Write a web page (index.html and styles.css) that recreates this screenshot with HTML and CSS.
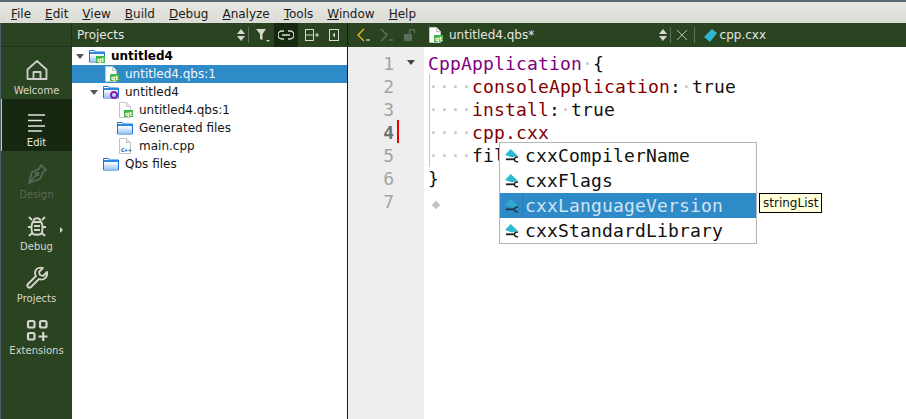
FILE: index.html
```html
<!DOCTYPE html>
<html lang="en">
<head>
<meta charset="utf-8">
<title>Qt Creator</title>
<link rel="stylesheet" href="styles.css">
</head>
<body>
<div class="app">
  <nav class="menubar">
    <span class="menu"><u>F</u>ile</span><span class="menu"><u>E</u>dit</span><span class="menu"><u>V</u>iew</span><span class="menu"><u>B</u>uild</span><span class="menu"><u>D</u>ebug</span><span class="menu"><u>A</u>nalyze</span><span class="menu"><u>T</u>ools</span><span class="menu"><u>W</u>indow</span><span class="menu"><u>H</u>elp</span>
  </nav>
  <div class="main">
    <aside class="modebar">
      <div class="mode-spacer"></div>
      <div class="mode">
        <svg width="24" height="24" viewBox="0 0 24 24" fill="none" stroke="#cfcfc8" stroke-width="1.800" stroke-linejoin="round"><path d="M12 3l9.500 8.500V21h-19V11.500z"/><path d="M8.500 21v-7h7v7"/></svg>
        <span>Welcome</span>
      </div>
      <div class="mode active">
        <svg width="24" height="24" viewBox="0 0 24 24" fill="none" stroke="#e4e4e0" stroke-width="1.600"><path d="M3 5h17M3 10.500h14M3 16h17M3 21h14"/></svg>
        <span>Edit</span>
      </div>
      <div class="mode disabled">
        <svg width="24" height="24" viewBox="0 0 24 24" fill="none" stroke="#56685a" stroke-width="1.800" stroke-linejoin="round"><path d="M16 3l5 5-3 2-3 7-11 4 3-11 7-3z"/><path d="M5 20l6-7"/><circle cx="12" cy="12" r="1.500"/></svg>
        <span>Design</span>
      </div>
      <div class="mode">
        <svg width="24" height="24" viewBox="0 0 24 24" fill="none" stroke="#d6d6d0" stroke-width="1.800"><path d="M8 8h8c2 2 2 10 0 12-1 1-7 1-8 0-2-2-2-10 0-12z"/><path d="M8.500 8c0-5 7-5 7 0M4 3l3 3M20 3l-3 3M3 13h3M18 13h3M4 22l3-3M20 22l-3-3M9 12h6M9 16h6"/></svg>
        <span>Debug</span>
        <i class="mode-arrow"></i>
      </div>
      <div class="mode">
        <svg width="24" height="24" viewBox="0 0 24 24" fill="none" stroke="#d6d6d0" stroke-width="1.800" stroke-linejoin="round"><path d="M22 6l-4 4-3-1-1-3 4-4c-3-1-8 0-8 5 0 1 0 2 1 3L3 18c-1 1-1 2 0 3s2 1 3 0l8-8c5 2 9-2 8-7z"/></svg>
        <span>Projects</span>
      </div>
      <div class="mode">
        <svg width="24" height="24" viewBox="0 0 24 24" fill="none" stroke="#d6d6d0" stroke-width="2.200"><rect x="3" y="3" width="6.500" height="6.500" rx="1.500"/><rect x="15" y="3" width="6.500" height="6.500" rx="1.500"/><rect x="3" y="15" width="6.500" height="6.500" rx="1.500"/><path d="M18.250 14v9M13.500 18.500h9"/></svg>
        <span>Extensions</span>
      </div>
    </aside>

    <section class="projects">
      <header class="toolbar projects-bar">
        <span class="bar-title">Projects</span>
        <svg class="updown" width="8" height="12" viewBox="0 0 8 12" fill="#d8d8d2"><path d="M4 0l4 5H0zM4 12l4-5H0z"/></svg>
        <i class="sep"></i>
        <svg class="ti" width="16" height="16" viewBox="0 0 16 16" fill="#d8d8d2"><path d="M1 2h10L7.500 7v6L5 12V7z"/><path d="M11 13h4l-2 2z"/></svg>
        <span class="ti-btn"><svg width="16" height="12" viewBox="0 0 16 12" fill="none" stroke="#d8d8d2" stroke-width="1.400"><path d="M6 2H4a4 4 0 0 0 0 8h2M10 2h2a4 4 0 0 1 0 8h-2M4 6h8"/></svg></span>
        <svg class="ti split" width="16" height="14" viewBox="0 0 16 14" fill="none" stroke="#d8d8d2"><rect x="1.500" y="1.500" width="8" height="11"/><path d="M1.500 7h8M11 7h4M13 5v4"/></svg>
        <svg class="ti last" width="10" height="12" viewBox="0 0 10 12" fill="none" stroke="#d8d8d2"><rect x=".5" y=".5" width="9" height="11"/><path d="M6 3.500v5L3.500 6z" fill="#d8d8d2" stroke="none"/></svg>
      </header>
      <ul class="tree">
        <li class="row root bold"><i class="twist"></i>
          <svg class="ficon" width="16" height="16" viewBox="0 0 16 16"><use href="#folder"/><rect x="7" y="8" width="9" height="7" fill="#3fb54a"/><text x="8" y="14" class="qt">qt</text></svg>
          <span>untitled4</span></li>
        <li class="row sel l1">
          <svg class="ficon" width="16" height="16" viewBox="0 0 16 16"><use href="#file"/><rect x="7" y="8" width="9" height="7" fill="#3fb54a"/><text x="8" y="14" class="qt">qt</text></svg>
          <span>untitled4.qbs:1</span></li>
        <li class="row root second"><i class="twist"></i>
          <svg class="ficon" width="16" height="16" viewBox="0 0 16 16"><use href="#folder"/><circle cx="11" cy="11" r="3" fill="none" stroke="#8a1fb0" stroke-width="2"/></svg>
          <span>untitled4</span></li>
        <li class="row l2">
          <svg class="ficon" width="16" height="16" viewBox="0 0 16 16"><use href="#file"/><rect x="7" y="8" width="9" height="7" fill="#3fb54a"/><text x="8" y="14" class="qt">qt</text></svg>
          <span>untitled4.qbs:1</span></li>
        <li class="row l2">
          <svg class="ficon" width="16" height="16" viewBox="0 0 16 16"><use href="#folder"/></svg>
          <span>Generated files</span></li>
        <li class="row l2">
          <svg class="ficon" width="16" height="16" viewBox="0 0 16 16"><use href="#file"/><text x="4" y="14" class="cpp">C++</text></svg>
          <span>main.cpp</span></li>
        <li class="row l1">
          <svg class="ficon" width="16" height="16" viewBox="0 0 16 16"><use href="#folder"/></svg>
          <span>Qbs files</span></li>
      </ul>
    </section>

    <section class="editor">
      <header class="toolbar editor-bar">
        <svg class="ti back" width="14" height="14" viewBox="0 0 14 14" fill="none" stroke="#e2b21c" stroke-width="1.500"><path d="M7 1L1 7l6 6"/><path d="M9 12h4" stroke="#b8b8b0"/></svg>
        <svg class="ti fwd" width="14" height="14" viewBox="0 0 14 14" fill="none" stroke="#5c6f5f" stroke-width="1.500"><path d="M1 1l6 6-6 6M9 12h4"/></svg>
        <svg class="ti lock" width="12" height="12" viewBox="0 0 12 12" fill="#5c6f5f"><rect x="0" y="5" width="8" height="7"/><path d="M5.500 5V2.500a2.500 2.500 0 0 1 5 0V4" fill="none" stroke="#5c6f5f" stroke-width="1.500"/></svg>
        <svg class="ti doc" width="16" height="16" viewBox="0 0 16 16"><use href="#file"/><rect x="7" y="8" width="9" height="7" fill="#3fb54a"/><text x="8" y="14" class="qt">qt</text></svg>
        <span class="bar-doc">untitled4.qbs*</span>
        <svg class="updown push" width="8" height="12" viewBox="0 0 8 12" fill="#d8d8d2"><path d="M4 0l4 5H0zM4 12l4-5H0z"/></svg>
        <i class="sep s1"></i>
        <svg class="ti close" width="10" height="10" viewBox="0 0 10 10" stroke="#b8b8b0" stroke-width="1"><path d="M0 0l10 10M10 0L0 10"/></svg>
        <i class="sep s2"></i>
        <svg class="ti sym" width="13" height="13" viewBox="0 0 13 13" fill="#2fb7d0"><path d="M8 0l5 4-7 9-6-5z"/></svg>
        <span class="bar-doc sym-name">cpp.cxx</span>
      </header>
      <div class="edit-body">
        <div class="gutter">
          <div class="ln">1</div><div class="ln">2</div><div class="ln">3</div><div class="ln cur">4</div><div class="ln">5</div><div class="ln">6</div><div class="ln">7</div>
          <i class="fold"></i>
          <i class="mark"></i>
        </div>
        <div class="code">
          <div class="cl"><span class="typ">CppApplication</span><span class="dot">·</span>{</div>
          <div class="cl"><span class="dot">····</span><span class="prop">consoleApplication</span>:<span class="dot">·</span>true</div>
          <div class="cl"><span class="dot">····</span><span class="prop">install</span>:<span class="dot">·</span>true</div>
          <div class="cl"><span class="dot">····</span><span class="prop">cpp.cxx</span></div>
          <div class="cl"><span class="dot">····</span>files</div>
          <div class="cl">}</div>
          <div class="cl"><span class="diamond"></span></div>
          <i class="indent"></i>
          <div class="popup">
            <div class="item"><svg class="pi" width="16" height="16"><use href="#sym"/></svg><span>cxxCompilerName</span></div>
            <div class="item"><svg class="pi" width="16" height="16"><use href="#sym"/></svg><span>cxxFlags</span></div>
            <div class="item on"><svg class="pi" width="16" height="16"><use href="#sym"/></svg><i class="item-rule"></i><span>cxxLanguageVersion</span></div>
            <div class="item"><svg class="pi" width="16" height="16"><use href="#sym"/></svg><span>cxxStandardLibrary</span></div>
          </div>
          <div class="tip">stringList</div>
        </div>
      </div>
    </section>
  </div>
</div>
<svg class="defs" width="0" height="0">
  <defs>
    <linearGradient id="fg" x1="0" y1="0" x2="0" y2="1"><stop offset="0" stop-color="#ffffff"/><stop offset="1" stop-color="#9cc4f0"/></linearGradient>
    <symbol id="folder" viewBox="0 0 16 16" overflow="visible">
      <path d="M.5 14V2.500h5l1 1.500h9v10z" fill="#fff" stroke="#1c74d8"/>
      <rect x="1" y="4" width="14" height="2" fill="#2f86e0"/>
      <rect x="1" y="6" width="14" height="7.500" fill="url(#fg)"/>
    </symbol>
    <symbol id="file" viewBox="0 0 16 16" overflow="visible">
      <path d="M2.500.5h7l4 4v11h-11z" fill="#fff" stroke="#c4c4c4"/>
      <path d="M9.500.5v4h4" fill="#eee" stroke="#c4c4c4"/>
    </symbol>
    <symbol id="sym" viewBox="0 0 16 16">
      <path d="M0 7l5.700-6 7 6.700L7 9.500z" fill="#2fb7d0"/>
      <path d="M1 11.300h8" stroke="#1c1c1c" stroke-width="1.800" fill="none"/>
      <path d="M13 9.300a2.400 2.400 0 1 0 0 4.200" stroke="#1c1c1c" stroke-width="1.500" fill="none"/>
    </symbol>
  </defs>
</svg>
</body>
</html>
```
FILE: styles.css
```css
* { box-sizing: border-box; }
html, body { margin: 0; height: 100%; overflow: hidden; }
body { font-family: "DejaVu Sans", sans-serif; font-size: 12px; color: #111; background: #fff; }
ul { list-style: none; margin: 0; padding: 0; }
i { display: block; }
.defs { position: absolute; }
.app { width: 906px; height: 419px; display: flex; flex-direction: column; }

.menubar { height: 23px; flex: none; display: flex; align-items: center; padding: 2px 0 0 4px; background: linear-gradient(#e7e7e3, #dcdcd6); border-top: 2px solid #5b6b76; color: #1c1c1c; }
.menu { padding: 0 7px; }
.main { flex: 1; display: flex; min-height: 0; }

.modebar { width: 72px; flex: none; background: #2a4320; display: flex; flex-direction: column; border-left: 1px solid #4d5f6a; color: #d6d6d0; }
.mode-spacer { height: 24px; border-bottom: 1px solid #1e3317; border-right: 1px solid #1e3317; }
.mode { height: 52px; position: relative; display: flex; flex-direction: column; align-items: center; gap: 3px; font-size: 10px; padding-top: 11px; }
.mode span { line-height: 12px; }
.mode.active { background: #16280f; box-shadow: inset 1px 0 0 #c8c8c4; color: #e8e8e4; }
.mode.disabled { color: #56685a; }
.mode-arrow { position: absolute; right: 9px; top: 24px; border-left: 3px solid #d6d6d0; border-top: 3px solid transparent; border-bottom: 3px solid transparent; }

.toolbar { height: 24px; flex: none; background: #2a4320; display: flex; align-items: center; color: #e6e6e0; }
.projects { width: 276px; flex: none; display: flex; flex-direction: column; border-right: 1px solid #1a1a1a; }
.projects-bar { padding-left: 5px; }
.bar-title { flex: 1; }
.sep { width: 1px; height: 16px; background: #5c6f5f; }
.updown { flex: none; }
.projects-bar .sep { margin: 0 6px 0 3px; }
.ti { flex: none; }
.ti-btn { width: 24px; height: 24px; background: #16280f; display: flex; align-items: center; justify-content: center; margin-left: 3px; }
.split { margin-left: 6px; }
.projects-bar .last { margin: 0 8px 0 9px; }

.tree { flex: 1; background: #fff; }
.row { height: 18px; display: flex; align-items: center; gap: 6px; color: #141414; }
.root { padding-left: 4px; }
.second { padding-left: 18px; }
.bold { font-weight: bold; color: #000; }
.l1 { padding-left: 31px; }
.l2 { padding-left: 45px; }
.sel { background: #2f8ac8; color: #f0f6fb; }
.twist { width: 0; height: 0; margin-right: -1px; border-top: 5px solid #555; border-left: 4px solid transparent; border-right: 4px solid transparent; }
.ficon { flex: none; }
.qt { font-size: 6px; font-weight: bold; fill: #fff; }
.cpp { font-size: 5px; font-weight: bold; letter-spacing: -.6px; fill: #234a88; }

.editor { flex: 1; min-width: 0; display: flex; flex-direction: column; }
.editor-bar { padding-left: 9px; }
.back { margin-right: 9px; }
.fwd { margin-right: 10px; }
.lock { margin-right: 11px; }
.doc { margin-right: 6px; }
.push { margin-left: auto; }
.s1 { margin: 0 6px 0 3px; }
.close { margin-right: 7px; }
.s2 { margin-right: 9px; }
.sym { margin-right: 3px; }
.sym-name { margin-right: 140px; }

.edit-body { flex: 1; display: flex; min-height: 0; }
.gutter { width: 76px; flex: none; background: #eeeeee; position: relative; padding-top: 5px; }
.ln { height: 23px; width: 46px; text-align: right; font-family: "DejaVu Sans Mono", monospace; font-size: 18px; line-height: 23px; color: #a4a4a4; }
.ln.cur { color: #707070; font-weight: bold; }
.fold { position: absolute; left: 59px; top: 13px; border-top: 5px solid #444; border-left: 4px solid transparent; border-right: 4px solid transparent; }
.mark { position: absolute; left: 49px; top: 73px; width: 2px; height: 23px; background: #f00000; }
.code { flex: 1; position: relative; padding: 5px 0 0 4px; font-family: "DejaVu Sans Mono", monospace; font-size: 18px; letter-spacing: .164px; line-height: 23px; color: #111; background: #fff; }
.cl { height: 23px; white-space: pre; }
.typ { color: #800080; }
.prop { color: #800000; }
.dot { color: #c4c4c4; }
.diamond { display: inline-block; width: 6px; height: 6px; margin-left: 5px; background: #c4c4c4; transform: rotate(45deg); }
.indent { position: absolute; left: 5px; top: 27px; width: 1px; height: 93px; background: #c8c8c8; }

.popup { position: absolute; left: 75px; top: 95px; width: 258px; height: 102px; border: 1px solid #b4b4b4; background: #fff; }
.item { height: 25px; display: flex; align-items: center; gap: 4px; padding-left: 5px; line-height: 25px; position: relative; }
.item.on { background: #2f8ac8; color: #cfe4f3; }
.item.on .pi { opacity: .75; }
.item-rule { position: absolute; left: 22px; top: 0; width: 1px; height: 25px; background: #2a7cb4; }
.pi { flex: none; }
.tip { position: absolute; left: 335px; top: 146px; width: 63px; height: 20px; padding-left: 3px; border: 1px solid #000; background: #ffffdc; font-family: "DejaVu Sans", sans-serif; font-size: 12px; letter-spacing: 0; line-height: 18px; color: #111; }
```
